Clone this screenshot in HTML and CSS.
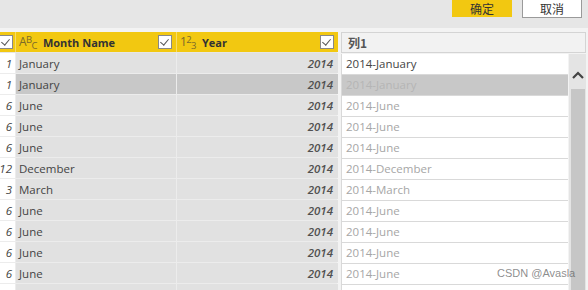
FILE: index.html
```html
<!DOCTYPE html>
<html lang="zh-CN">
<head>
  <meta charset="UTF-8" />
  <title>添加列</title>
  <link rel="stylesheet" href="styles.css">
</head>
<body>
  <div class="toolbar">
    <button class="btn btn-ok">确定</button>
    <button class="btn btn-cancel">取消</button>
  </div>
  <div class="strip"></div>

  <div class="main">
    <div class="grid">
      <div class="row head">
        <div class="cell idx"><span class="chk"></span></div>
        <div class="cell"><span class="type">A<sup>B</sup><sub>C</sub></span><b>Month Name</b><span class="chk"></span></div>
        <div class="cell"><span class="type">1<sup>2</sup><sub>3</sub></span><b>Year</b><span class="chk"></span></div>
      </div>
      <div class="row">
        <div class="cell idx">1</div><div class="cell">January</div><div class="cell num">2014</div>
      </div>
      <div class="row sel">
        <div class="cell idx">1</div><div class="cell">January</div><div class="cell num">2014</div>
      </div>
      <div class="row">
        <div class="cell idx">6</div><div class="cell">June</div><div class="cell num">2014</div>
      </div>
      <div class="row">
        <div class="cell idx">6</div><div class="cell">June</div><div class="cell num">2014</div>
      </div>
      <div class="row">
        <div class="cell idx">6</div><div class="cell">June</div><div class="cell num">2014</div>
      </div>
      <div class="row">
        <div class="cell idx">12</div><div class="cell">December</div><div class="cell num">2014</div>
      </div>
      <div class="row">
        <div class="cell idx">3</div><div class="cell">March</div><div class="cell num">2014</div>
      </div>
      <div class="row">
        <div class="cell idx">6</div><div class="cell">June</div><div class="cell num">2014</div>
      </div>
      <div class="row">
        <div class="cell idx">6</div><div class="cell">June</div><div class="cell num">2014</div>
      </div>
      <div class="row">
        <div class="cell idx">6</div><div class="cell">June</div><div class="cell num">2014</div>
      </div>
      <div class="row">
        <div class="cell idx">6</div><div class="cell">June</div><div class="cell num">2014</div>
      </div>
      <div class="row">
        <div class="cell idx"></div><div class="cell"></div><div class="cell num"></div>
      </div>
    </div>

    <div class="result">
      <div class="result-head">列1</div>
      <div class="result-body">
        <div class="list">
          <div class="item first">2014-January</div>
          <div class="item sel">2014-January</div>
          <div class="item">2014-June</div>
          <div class="item">2014-June</div>
          <div class="item">2014-June</div>
          <div class="item">2014-December</div>
          <div class="item">2014-March</div>
          <div class="item">2014-June</div>
          <div class="item">2014-June</div>
          <div class="item">2014-June</div>
          <div class="item">2014-June</div>
          <div class="item"></div>
        </div>
        <div class="scroll">
          <svg class="arrow" width="12" height="8" viewBox="0 0 12 8"><path d="M1 7 L6 2 L11 7" fill="none" stroke="#444" stroke-width="2.2"/></svg>
          <div class="thumb"></div>
        </div>
      </div>
    </div>
  </div>

  <div class="watermark">CSDN @Avasla</div>
</body>
</html>
```

FILE: styles.css
```css
body {
  margin: 0;
  width: 588px;
  height: 290px;
  overflow: hidden;
  background: #e6e6e6;
  font-family: "Open Sans", "Noto Sans CJK SC", sans-serif;
  font-size: 11.5px;
  color: #444;
  position: relative;
}

.toolbar {
  height: 28px;
  display: flex;
  justify-content: flex-end;
  align-items: flex-start;
  gap: 10px;
  padding-right: 6px;
}

.btn {
  font-family: "Noto Sans CJK SC", sans-serif;
  font-size: 12px;
  color: #333;
  width: 60px;
  height: 18px;
  padding: 0;
  border: none;
  line-height: 16px;
}

.btn-ok {
  background: #f2c811;
  height: 17px;
}

.btn-cancel {
  background: #fff;
  border: 1px solid #9a9a9a;
  border-top: none;
}

.strip {
  height: 4px;
  background: #f3f3f3;
}

.main {
  display: flex;
  gap: 4px;
  background: #f3f3f3;
}

.grid {
  width: 337px;
}

.row {
  display: grid;
  grid-template-columns: 15px 160px 161px;
  column-gap: 1px;
  height: 20px;
  border-bottom: 1px solid #ececec;
  background: #ececec;
}

.cell {
  background: #e1e1e1;
  display: flex;
  align-items: center;
  padding: 0 3px;
  white-space: nowrap;
  overflow: hidden;
}

.idx {
  background: #fff;
  justify-content: flex-end;
  padding: 0 3px 0 0;
  font-style: italic;
}

.num {
  justify-content: flex-end;
  font-style: italic;
  font-weight: 600;
  color: #505050;
  padding-right: 5px;
}

.sel .cell {
  background: #c8c8c8;
}

.sel .idx {
  background: #fff;
}

.head {
  background: #f7dc68;
  border-bottom: 1px solid #e6e6e6;
}

.head .cell {
  background: #f2c811;
  color: #333;
  padding: 0 4px 0 3px;
}

.head .idx {
  padding: 0;
  justify-content: flex-end;
}

.head b {
  font-size: 11px;
  margin-left: 6px;
  flex: 1;
}

.type {
  font-size: 12px;
  color: #7a6a2a;
  line-height: 1;
  letter-spacing: -0.6px;
}

.type sup,
.type sub {
  font-size: 9.5px;
  vertical-align: 0;
  position: relative;
}

.type sup {
  top: -3px;
}

.type sub {
  top: 3px;
}

.chk {
  width: 12px;
  height: 12px;
  background: #fff;
  border: 1px solid #888;
  position: relative;
  flex: none;
}

.chk::after {
  content: "";
  position: absolute;
  left: 3px;
  top: 1px;
  width: 4px;
  height: 7px;
  border: solid #555;
  border-width: 0 1.5px 1.5px 0;
  transform: rotate(40deg);
}

.head .idx .chk {
  margin-right: 2px;
}

.result {
  flex: 1;
  margin-right: 2px;
}

.result-head {
  height: 19px;
  line-height: 19px;
  background: #f2f2f2;
  border: 1px solid #d4d4d4;
  padding-left: 6px;
  font-family: "Noto Sans CJK SC", sans-serif;
  font-weight: bold;
  color: #555;
  font-size: 12px;
  margin-bottom: 1px;
}

.result-body {
  display: flex;
}

.list {
  width: 227px;
  background: #fff;
}

.item {
  height: 20px;
  line-height: 20px;
  border: 1px solid #d9d9d9;
  border-top: none;
  border-right: none;
  padding-left: 4px;
  color: #a6a6a6;
  font-size: 11.5px;
  background: #fff;
}

.item.first {
  color: #444;
}

.item.sel {
  background: #c8c8c8;
  color: #b5b5b5;
}

.scroll {
  flex: 1;
  margin-left: 1px;
  background: #e4e4e4;
  display: flex;
  flex-direction: column;
  align-items: center;
}

.arrow {
  margin-top: 17px;
}

.thumb {
  margin-top: 10px;
  width: 14px;
  height: 220px;
  background: #c6c6c6;
}

.watermark {
  position: absolute;
  left: 497px;
  top: 267px;
  font-family: "Liberation Sans", sans-serif;
  font-size: 11px;
  color: rgba(90, 90, 90, 0.7);
}
```
